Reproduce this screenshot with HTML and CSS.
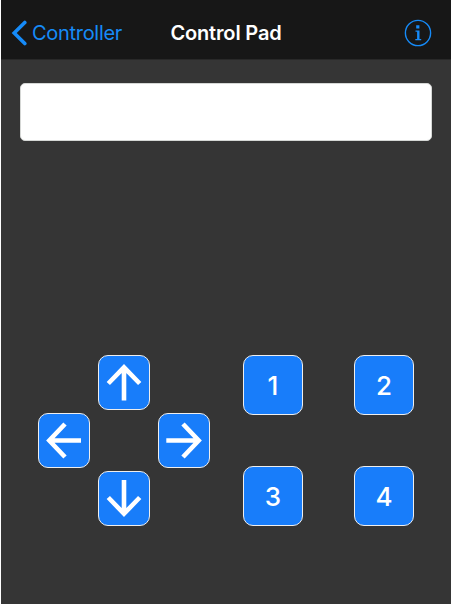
FILE: index.html
```html
<!DOCTYPE html>
<html lang="en">
<head>
<meta charset="utf-8">
<title>Control Pad</title>
<link rel="stylesheet" href="styles.css">
</head>
<body>
<div class="screen">
  <header class="navbar">
    <a class="back">
      <svg class="chevron" width="16" height="26" viewBox="0 0 16 26"><path d="M13.8 2.4 3.2 13 13.8 23.6"/></svg>
      <span class="back-label">Controller</span>
    </a>
    <h1 class="title">Control Pad</h1>
    <a class="info">
      <svg width="28" height="28" viewBox="0 0 28 28">
        <circle cx="14" cy="14" r="12.6"/>
        <path class="glyph" d="M12.2 6.3h3.2v3.2h-3.2zM11.5 11.5h4v8.4h1.7v1.3h-5.9v-1.3h1.8v-7.1h-1.6z"/>
      </svg>
    </a>
  </header>
  <main class="content">
    <div class="field"></div>
    <div class="controls">
      <div class="arrows">
        <button class="key arrow up"><svg width="52" height="55" viewBox="0 0 52 55"><path d="M26 45.5V12M10.3 28.5 26 12.3 41.7 28.5"/></svg></button>
        <button class="key arrow left"><svg width="52" height="55" viewBox="0 0 52 55"><path d="M43 27.5H11M27 11 11.3 27.5 27 44"/></svg></button>
        <button class="key arrow right"><svg width="52" height="55" viewBox="0 0 52 55"><path d="M8.3 27.5H41M25 11 40.7 27.5 25 44"/></svg></button>
        <button class="key arrow down"><svg width="52" height="55" viewBox="0 0 52 55"><path d="M26 9V43M10.3 26.5 26 42.7 41.7 26.5"/></svg></button>
      </div>
      <div class="numbers">
        <button class="key number">1</button>
        <button class="key number">2</button>
        <button class="key number">3</button>
        <button class="key number">4</button>
      </div>
    </div>
  </main>
</div>
</body>
</html>
```
FILE: styles.css
```css
* { box-sizing: border-box; }

body {
  margin: 0;
  background: #fff;
  font-family: Inter, "Liberation Sans", sans-serif;
}

.screen {
  display: flex;
  flex-direction: column;
  width: 450px;
  height: 604px;
  margin-left: 1px;
  background: #353535;
}

.navbar {
  display: grid;
  grid-template-columns: 1fr auto 1fr;
  align-items: center;
  height: 60px;
  padding: 7px 18px 0;
  background: #171717;
  border-bottom: 1px solid #292929;
}

.back {
  display: flex;
  align-items: center;
  gap: 5px;
  margin-left: -8px;
  color: #168bf8;
}

.chevron path {
  fill: none;
  stroke: #168bf8;
  stroke-width: 3.6;
  stroke-linecap: round;
}

.back-label {
  font-size: 20px;
  letter-spacing: -0.3px;
  line-height: 26px;
}

.title {
  margin: 0;
  color: #fff;
  font-size: 20px;
  font-weight: 600;
  letter-spacing: -0.15px;
  line-height: 26px;
}

.info {
  display: flex;
  justify-self: end;
  margin-right: 1px;
}

.info circle {
  fill: none;
  stroke: #168bf8;
  stroke-width: 1.4;
}

.glyph { fill: #168bf8; }

.content {
  display: flex;
  flex: 1;
  flex-direction: column;
  justify-content: space-between;
  padding: 23px 19px 78px;
}

.field {
  height: 58px;
  background: #fff;
  border: 1px solid #d5d7d5;
  border-radius: 5px;
}

.controls {
  display: flex;
  gap: 33px;
  padding-left: 18px;
}

.arrows {
  display: grid;
  grid-template: repeat(3, 55px) / repeat(3, 52px);
  gap: 3px 8px;
}

.key {
  display: flex;
  align-items: center;
  justify-content: center;
  padding: 0;
  border: 1px solid #eee;
  background: #187dfa;
  color: #fff;
  font-family: inherit;
}

.arrow { border-radius: 10px; }

.arrow svg {
  flex: none;
  fill: none;
  stroke: #fff;
  stroke-width: 4.6;
}

.up { grid-area: 1 / 2; }
.left { grid-area: 2 / 1; }
.right { grid-area: 2 / 3; }
.down { grid-area: 3 / 2; }

.numbers {
  display: grid;
  grid-template: repeat(2, 60px) / repeat(2, 60px);
  gap: 51px;
}

.number {
  border-radius: 10px;
  font-size: 26px;
  font-weight: 450;
}
```
